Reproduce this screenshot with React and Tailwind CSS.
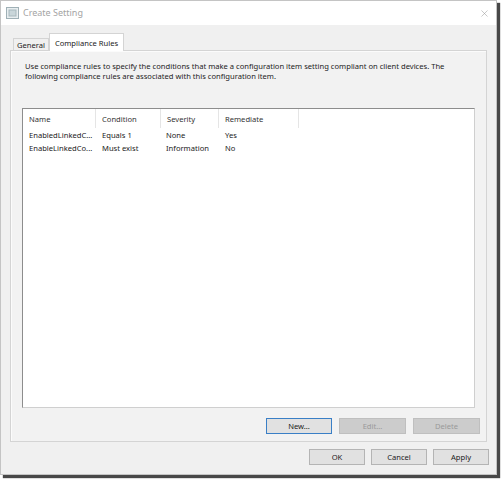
import { X } from 'lucide-react'

const rules = [
  { name: 'EnabledLinkedC...', condition: 'Equals 1', severity: 'None', remediate: 'Yes' },
  { name: 'EnableLinkedCo...', condition: 'Must exist', severity: 'Information', remediate: 'No' },
]

const columns = [
  { label: 'Name', w: 'w-[73px]' },
  { label: 'Condition', w: 'w-[65px]' },
  { label: 'Severity', w: 'w-[58px]' },
  { label: 'Remediate', w: 'w-[80px]' },
]

function Button({ children, disabled, focused }) {
  return (
    <button
      className={
        'w-full h-[16px] flex items-center justify-center border ' +
        (disabled
          ? 'bg-[#cccccc] border-[#bfbfbf] text-[#9a9a9a]'
          : focused
            ? 'bg-[#e1e1e1] border-[#3a7fc6] text-[#222]'
            : 'bg-[#e1e1e1] border-[#b4b4b4] text-[#222]')
      }
    >
      {children}
    </button>
  )
}

export default function App() {
  return (
    <div className="w-[504px] h-[479px] bg-white text-[7.6px] leading-[10px]" style={{ fontFamily: '"Noto Sans", "Open Sans", sans-serif' }}>
      <div className="w-[497px] h-[475px] flex flex-col border border-[#c4c4c4] shadow-[3px_3px_1px_rgba(40,40,40,0.85)] bg-[#f0f0f0]">
        {/* title bar */}
        <div className="h-[24px] bg-white flex items-center pl-[5px] pr-[6px]">
          <svg width="13" height="12" viewBox="0 0 13 12" className="mr-[4px]">
            <rect x="0.5" y="0.5" width="12" height="11" fill="#e8eef0" stroke="#9fb0b6" />
            <rect x="3" y="3" width="7" height="6" fill="#c9d6da" stroke="#a8b8bd" />
          </svg>
          <span className="text-[9px] text-[#a4a4a4]">Create Setting</span>
          <X className="ml-auto" size={11} strokeWidth={1.2} color="#9a9a9a" />
        </div>

        {/* tabs */}
        <div className="flex items-end pl-[12px] pt-[7px] h-[25px]">
          <div className="h-[12px] w-[36px] border border-b-0 border-[#d4d4d4] bg-[#f0f0f0] flex items-center justify-center text-[#222]">
            General
          </div>
          <div className="h-[18px] w-[75px] border border-b-0 border-[#d4d4d4] bg-white flex items-center justify-center text-[#222] -mb-px relative z-10">
            Compliance Rules
          </div>
        </div>

        {/* tab page */}
        <div className="mx-[9px] h-[392px] border border-[#d4d4d4] bg-[#f2f2f2] shadow-[inset_1px_1px_0_#fbfbfb] flex flex-col">
          <p className="pl-[14px] pt-[10px] text-[#222] whitespace-nowrap">
            Use compliance rules to specify the conditions that make a configuration item setting compliant on client devices. The
            <br />
            following compliance rules are associated with this configuration item.
          </p>

          <div className="mt-[27px] mx-[11px] h-[300px] bg-white border border-[#8d8d8d] border-r-[#cfcfcf] border-b-[#cfcfcf]">
            <div className="flex h-[19px] text-[#333]">
              {columns.map(c => (
                <div key={c.label} className={c.w + ' pl-[6px] flex items-center border-r border-[#e5e5e5]'}>
                  {c.label}
                </div>
              ))}
            </div>
            <div>
              {rules.map(r => (
                <div key={r.name} className="flex h-[13px] items-center text-[#222]">
                  <div className="w-[73px] pl-[6px] whitespace-nowrap">{r.name}</div>
                  <div className="w-[65px] pl-[6px]">{r.condition}</div>
                  <div className="w-[58px] pl-[5px]">{r.severity}</div>
                  <div className="w-[80px] pl-[6px]">{r.remediate}</div>
                </div>
              ))}
            </div>
          </div>

          <div className="flex justify-end gap-[7px] mt-[10px] pr-[6px]">
            <div className="w-[66px]"><Button focused>New...</Button></div>
            <div className="w-[67px]"><Button disabled>Edit...</Button></div>
            <div className="w-[67px]"><Button disabled>Delete</Button></div>
          </div>
        </div>

        {/* dialog buttons */}
        <div className="flex justify-end gap-[6px] mt-[7px] pr-[7px]">
          <div className="w-[56px]"><Button>OK</Button></div>
          <div className="w-[56px]"><Button>Cancel</Button></div>
          <div className="w-[56px]"><Button>Apply</Button></div>
        </div>
      </div>
    </div>
  )
}
